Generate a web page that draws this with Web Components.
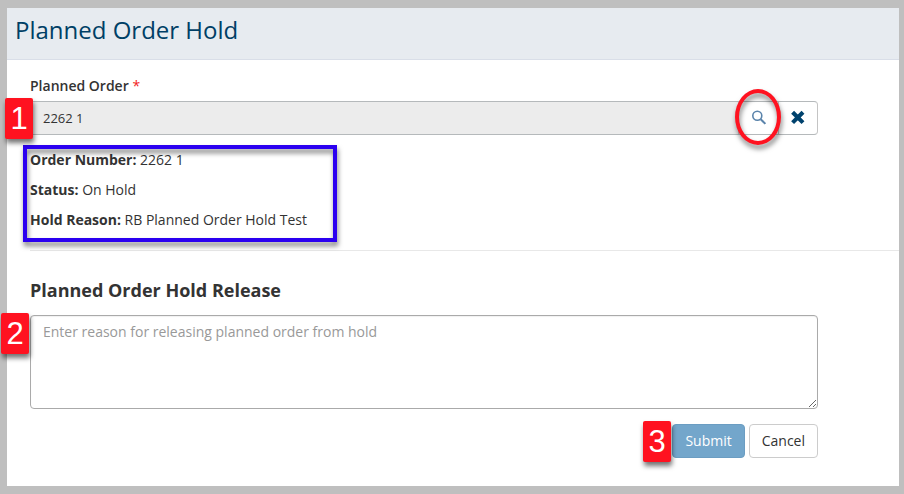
<!DOCTYPE html>
<html lang="en"><head><meta charset="utf-8"><title>Planned Order Hold</title>
<style>
html,body{margin:0;height:100%;overflow:hidden}
body{background:#bfbfbf;font:14px/20px "Open Sans",sans-serif;color:#333;position:relative}
</style></head><body>
<hold-page></hold-page>
<script>
function define(name, html){
  const t=document.createElement('template'); t.innerHTML=html;
  customElements.define(name, class extends HTMLElement{
    constructor(){super();this.attachShadow({mode:'open'}).append(t.content.cloneNode(true));}
  });
}
define('page-header',`<style>:host{display:block;box-sizing:border-box;height:52px;padding:6px 8px 0;background:#e7ebf0;border-bottom:1px solid #d9dee8;color:#003f66;font-size:24px;line-height:32px}h1{font:inherit;margin:0}</style><h1><slot></slot></h1>`);
define('lookup-field',`<style>:host{display:block}
.label{font-weight:600;line-height:20px;margin-bottom:5px}.label i{color:#f21d1d;font-style:normal;font-weight:400}
.row{display:flex;box-sizing:border-box;height:34px;border:1px solid #b5b9bb;border-radius:4px;overflow:hidden;background:#fff}
.value{flex:1;background:#ececec;padding:6px 12px;font-size:13px;line-height:20px;border-right:1px solid #c6c6c6}
.btn{display:flex;align-items:center;justify-content:center;width:39px;box-sizing:border-box}.x{border-left:1px solid #c4c4c4}
.row{border-color:#b5b9bb #c4c4c4 #b5b9bb #b5b9bb}svg{display:block}</style>
<div class="label"><slot name="label"></slot> <i>*</i></div>
<div class="row"><div class="value"><slot></slot></div>
<div class="btn"><svg width="16" height="16" viewBox="0 0 16 16" fill="none" stroke="#5b84ab"><circle cx="6.3" cy="5.8" r="4.5" stroke-width="1.6"/><path d="M9.7 9.2 14.4 13.9" stroke-width="2"/></svg></div>
<div class="btn x"><svg width="16" height="16" viewBox="0 0 16 16"><path d="M2.6 2.2 13 12.6M13 2.2 2.6 12.6" stroke="#00426d" stroke-width="4.1" stroke-linecap="butt"/></svg></div></div>`);
define('detail-line',`<style>:host{display:block;margin-bottom:10px}b{font-weight:700}</style><b><slot name="name"></slot></b> <slot></slot>`);
define('reason-box',`<style>:host{display:flex}textarea{flex:1;box-sizing:border-box;height:94px;margin:0;padding:6px 12px;border:1px solid #aaa;border-radius:4px;font:14px/20px "Open Sans",sans-serif;resize:vertical;outline:none;background:#fff;box-shadow:inset 0 1px 1px rgba(0,0,0,.06)}textarea::placeholder{color:#999;opacity:1}</style><textarea placeholder="Enter reason for releasing planned order from hold"></textarea>`);
define('form-button',`<style>:host{display:block}button{display:block;height:34px;padding:0 12px;border:1px solid #ccc;border-radius:4px;background:#fff;color:#333;font:14px/20px "Open Sans",sans-serif}:host([primary]) button{background:#73a6cb;border-color:#6b9dc2;color:#fff}</style><button><slot></slot></button>`);
define('step-badge',`<style>:host{position:absolute;box-sizing:border-box;width:28px;height:41px;background:#ff1220;border-radius:2px;color:#fff;font:31px/41px "Liberation Sans",Arial,sans-serif;text-align:center;box-shadow:1px 4px 5px rgba(0,0,0,.55)}</style><slot></slot>`);
define('mark-outline',`<style>:host{position:absolute;box-sizing:border-box;border:4px solid #2b00f0;filter:drop-shadow(1px 4px 2.5px rgba(0,0,0,.5))}:host([round]){border-color:#ff1220;border-radius:50%}</style>`);
define('hold-page',`<style>
:host{display:block;box-sizing:border-box;height:494px;padding:8px 5px 8px 7px}
main{height:478px;background:#fff}
.form{padding-left:23px}.col{width:788px}
lookup-field{padding-top:16px}
.details{padding-top:15px;border-bottom:1px solid #e8e8e8;height:85px;padding-bottom:15px}
h2{margin:0;padding:29px 0 14px;font-size:18px;line-height:21px;font-weight:700}
.actions{display:flex;justify-content:flex-end;gap:4px;margin-top:15px}
</style>
<main><page-header>Planned Order Hold</page-header>
<div class="form"><div class="col"><lookup-field><span slot="label">Planned Order</span>2262 1</lookup-field></div>
<div class="details"><detail-line><span slot="name">Order Number:</span>2262 1</detail-line><detail-line><span slot="name">Status:</span>On Hold</detail-line><detail-line><span slot="name">Hold Reason:</span>RB Planned Order Hold Test</detail-line></div>
<div class="col"><h2>Planned Order Hold Release</h2><reason-box></reason-box>
<div class="actions"><form-button primary>Submit</form-button><form-button>Cancel</form-button></div></div></div></main>
<mark-outline style="left:23px;top:145px;width:314px;height:97px"></mark-outline>
<mark-outline round style="left:735px;top:89px;width:46px;height:56px"></mark-outline>
<step-badge style="left:5px;top:98px">1</step-badge><step-badge style="left:1px;top:313px">2</step-badge><step-badge style="left:643px;top:421px">3</step-badge>`);
</script></body></html>
